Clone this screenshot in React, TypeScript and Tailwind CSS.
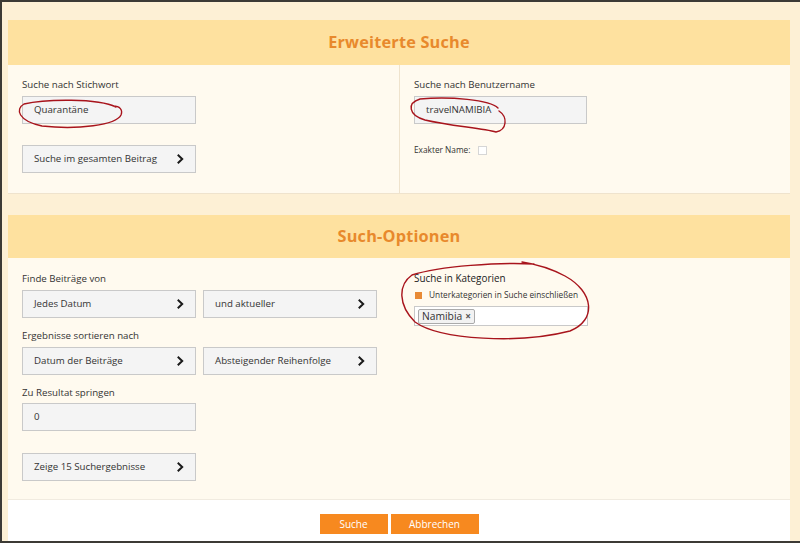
import React from "react";

const font = { fontFamily: '"Open Sans", "Liberation Sans", sans-serif' };

function Chevron() {
  return (
    <svg width="7" height="10" viewBox="0 0 7 10" className="shrink-0">
      <path d="M1.5 1.5 L5.2 5 L1.5 8.5" fill="none" stroke="#1a1a1a" strokeWidth="2" strokeLinecap="square" />
    </svg>
  );
}

function SelectBox({ label }: { label: string }) {
  return (
    <div className="w-[174px] h-[28px] flex items-center justify-between pl-[11px] pr-[11px] bg-[#f4f4f4] border border-[#c9c9c9] text-[9.7px] text-[#333]">
      <span>{label}</span>
      <Chevron />
    </div>
  );
}

function TextBox({ value, w = "w-[174px]" }: { value: string; w?: string }) {
  return (
    <div className={`${w} h-[28px] flex items-center pl-[11px] bg-[#f4f4f4] border border-[#c9c9c9] text-[9.7px] text-[#333]`}>
      {value}
    </div>
  );
}

function Label({ children }: { children: React.ReactNode }) {
  return <div className="h-[15px] leading-[15px] text-[9.7px] text-[#333]">{children}</div>;
}

function Header({ title, h }: { title: string; h: string }) {
  return (
    <div className={`${h} bg-[#fee19f] flex items-center justify-center`}>
      <span className="text-[16.3px] font-bold text-[#e8892c] tracking-[0.2px]">{title}</span>
    </div>
  );
}

export default function App() {
  return (
    <div
      className="relative w-[800px] h-[543px] overflow-hidden bg-[#fdf0d5] border-t-2 border-l-2 border-b-2 border-[#3c3a35]"
      style={font}
    >
      <div className="pt-[18px] pl-[6px] pr-[10px]">
        {/* Erweiterte Suche */}
        <div className="border-b border-[#efe3cd]">
          <Header title="Erweiterte Suche" h="h-[45px]" />
          <div className="h-[128px] bg-[#fffaef] flex">
            <div className="w-[391px] pl-[14px] pt-[12px]">
              <Label>Suche nach Stichwort</Label>
              <div className="mt-[4px]">
                <TextBox value="Quarantäne" />
              </div>
              <div className="mt-[21px]">
                <SelectBox label="Suche im gesamten Beitrag" />
              </div>
            </div>
            <div className="flex-1 border-l border-[#efe3cd] pl-[14px] pt-[12px]">
              <Label>Suche nach Benutzername</Label>
              <div className="mt-[4px]">
                <TextBox value="travelNAMIBIA" w="w-[173px]" />
              </div>
              <div className="mt-[21px] h-[10px] flex items-center gap-[8px]">
                <span className="text-[8.3px] text-[#333]">Exakter Name:</span>
                <span className="w-[9px] h-[9px] bg-white border border-[#d6d6d6]" />
              </div>
            </div>
          </div>
        </div>

        {/* Such-Optionen */}
        <div className="mt-[21px]">
          <Header title="Such-Optionen" h="h-[43px]" />
          <div className="h-[242px] bg-[#fffaef] flex border-b border-[#f1ebe0]">
            <div className="w-[392px] pl-[14px] pt-[13px]">
              <Label>Finde Beiträge von</Label>
              <div className="mt-[4px] flex gap-[7px]">
                <SelectBox label="Jedes Datum" />
                <SelectBox label="und aktueller" />
              </div>
              <div className="mt-[10px]">
                <Label>Ergebnisse sortieren nach</Label>
              </div>
              <div className="mt-[4px] flex gap-[7px]">
                <SelectBox label="Datum der Beiträge" />
                <SelectBox label="Absteigender Reihenfolge" />
              </div>
              <div className="mt-[10px]">
                <Label>Zu Resultat springen</Label>
              </div>
              <div className="mt-[3px]">
                <TextBox value="0" />
              </div>
              <div className="mt-[22px]">
                <SelectBox label="Zeige 15 Suchergebnisse" />
              </div>
            </div>
            <div className="flex-1 pl-[14px] pt-[13px]">
              <div className="h-[15px] leading-[15px] text-[9.9px] text-[#222]">Suche in Kategorien</div>
              <div className="mt-[4px] h-[10px] flex items-center gap-[7px] pl-[1px]">
                <span className="w-[7px] h-[7px] bg-[#e88a35]" />
                <span className="text-[8.3px] text-[#333]">Unterkategorien in Suche einschließen</span>
              </div>
              <div className="mt-[6px] w-[174px] h-[20px] bg-white border border-[#c9c9c9] flex items-center pl-[3px]">
                <span className="h-[15px] flex items-center gap-[3px] px-[3px] bg-[#f2f2f2] border border-[#aaaaaa] rounded-[2px] text-[10.3px] leading-none text-[#333]">
                  Namibia
                  <span className="text-[10px] text-[#555] font-bold">×</span>
                </span>
              </div>
            </div>
          </div>
          <div className="h-[41px] bg-white flex items-start justify-center gap-[3px] pt-[14px]">
            <span className="w-[68px] h-[20px] bg-[#f7891f] text-white text-[10px] flex items-center justify-center">
              Suche
            </span>
            <span className="w-[88px] h-[20px] bg-[#f7891f] text-white text-[10px] flex items-center justify-center">
              Abbrechen
            </span>
          </div>
        </div>
      </div>

      {/* hand-drawn red markings */}
      <svg className="absolute left-[-2px] top-[-2px] pointer-events-none" width="800" height="543" viewBox="0 0 800 543">
        <g fill="none" stroke="#a8141c" strokeWidth="1.4" strokeLinecap="round">
          <path d="M116 107 C 98 98, 45 99, 24 104 C 15 109, 18 121, 42 126 C 78 130, 116 125, 121 115 C 123 110, 120 106, 113 106" />
          <path d="M498 108 C 490 100, 450 96, 420 99 C 407 103, 408 115, 425 120 C 450 126, 482 128, 496 132 C 507 130, 508 117, 499 111" />
          <path d="M534 264 C 500 262, 440 266, 412 275 C 398 285, 398 305, 415 322 C 440 340, 520 344, 570 331 C 597 320, 594 292, 565 276 C 550 268, 535 264, 522 262" />
        </g>
      </svg>
    </div>
  );
}
